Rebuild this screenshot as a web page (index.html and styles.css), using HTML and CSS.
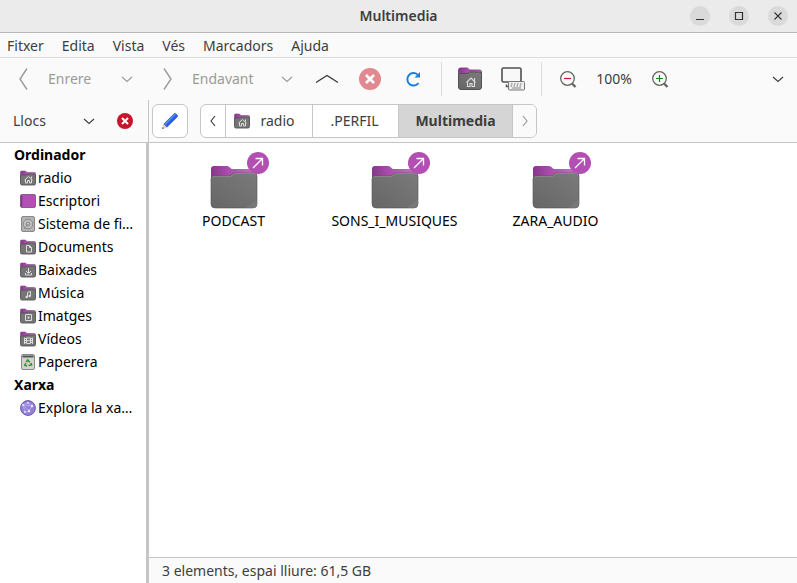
FILE: index.html
```html
<!DOCTYPE html>
<html lang="ca">
<head>
<meta charset="utf-8">
<meta name="viewport" content="width=device-width, initial-scale=1">
<title>Multimedia</title>
<link rel="stylesheet" href="styles.css">
</head>
<body>
<svg class="defs" aria-hidden="true">
  <defs>
    <linearGradient id="tab" x1="0" y1="0" x2="1" y2="0">
      <stop offset="0" stop-color="#84378a"/><stop offset=".35" stop-color="#a94bab"/><stop offset="1" stop-color="#c476c6"/>
    </linearGradient>
    <linearGradient id="front" x1="0" y1="1" x2="1" y2="0">
      <stop offset="0" stop-color="#666"/><stop offset="1" stop-color="#7b7b7b"/>
    </linearGradient>
    <symbol id="chevron" viewBox="0 0 12 8"><path d="M1 2 6 6.500 11 2" fill="none" stroke="currentColor" stroke-width="1.100"/></symbol>
    <symbol id="folder" viewBox="0 0 16 16">
      <path d="M1.500 1h4L7 2.500h7.500q1 0 1 1V8H.5V2q0-1 1-1z" fill="url(#tab)" stroke="#7d467e" stroke-width=".6"/>
      <path d="M.5 6q0-1 1-1h4.500l1-1h7.500q1 0 1 1v8.500q0 1.500-1.500 1.500H2Q.5 15 .5 13.500z" fill="#757575" stroke="#555" stroke-width=".9"/>
    </symbol>
    <symbol id="home-glyph" viewBox="0 0 16 16"><path d="m4.500 10 4-3.500 4 3.500M5.500 9.500v3.500h2v-2.500h2V13h2V9.500M11.500 6.500v2" fill="none" stroke="#ddd"/></symbol>
    <symbol id="big-folder" viewBox="0 0 48 44">
      <path d="M1 4q0-3 3-3h13q2 0 3 1.500T23 4h21q3 0 3 3v16H1z" fill="url(#tab)"/>
      <path d="M1 14q0-3 3-3h15q1.500 0 2.500-1.500T24 8h20q3 0 3 3v28q0 4-4 4H5q-4 0-4-4z" fill="url(#front)" stroke="#555" stroke-width=".6"/>
      <path d="M2 13q.5-1.500 2-1.500h16q1.500 0 2.500-1.500T25 8.500h19q1.500 0 2 1.500" fill="none" stroke="#929292" stroke-width=".7"/>
      <path d="M36 43 47 34v5q0 4-4 4z" fill="#858585" opacity=".4"/>
    </symbol>
  </defs>
</svg>

<div class="window">
  <header class="titlebar">
    <h1 class="title">Multimedia</h1>
    <div class="controls">
      <button class="control" aria-label="Minimitza"><svg width="20" height="20"><path d="M6 13.500h8" stroke="#333" stroke-width="1"/></svg></button>
      <button class="control" aria-label="Maximitza"><svg width="20" height="20"><path d="M6.500 6.500h7v7h-7z" fill="none" stroke="#333" stroke-width="1.200"/></svg></button>
      <button class="control" aria-label="Tanca"><svg width="20" height="20"><path d="m6.500 6.500 7 7m0-7-7 7" stroke="#333" stroke-width="1.100"/></svg></button>
    </div>
  </header>

  <nav class="menubar" aria-label="Menú">
    <button>Fitxer</button><button>Edita</button><button>Vista</button><button>Vés</button><button>Marcadors</button><button>Ajuda</button>
  </nav>

  <div class="toolbar">
    <button class="history back" disabled><svg width="16" height="24"><path d="M11 1.500 4 12l7 10.500" fill="none" stroke="currentColor" stroke-width="1.400"/></svg>Enrere</button>
    <button class="tool drop" disabled aria-label="Historial enrere"><svg width="12" height="8"><use href="#chevron"/></svg></button>
    <button class="history forward" disabled><svg width="16" height="24"><path d="M4 1.500 11 12 4 22.500" fill="none" stroke="currentColor" stroke-width="1.400"/></svg>Endavant</button>
    <button class="tool drop" disabled aria-label="Historial endavant"><svg width="12" height="8"><use href="#chevron"/></svg></button>
    <button class="tool" aria-label="Amunt"><svg width="24" height="24"><path d="m1 15.500 11-7 11 7" fill="none" stroke="#333" stroke-width="1.200"/></svg></button>
    <button class="tool" disabled aria-label="Atura"><svg width="22" height="22"><circle cx="11" cy="11" r="11" fill="#e28891"/><path d="m7 7 8 8m0-8-8 8" stroke="#fff" stroke-width="2.600"/></svg></button>
    <button class="tool" aria-label="Actualitza"><svg width="18" height="18"><path d="M13.500 4.500A6.200 6.200 0 1 0 14.500 13" fill="none" stroke="#1c7fd6" stroke-width="2"/><path d="M16 2v5.500h-5.500z" fill="#1c7fd6"/></svg></button>
    <span class="separator"></span>
    <button class="tool" aria-label="Carpeta personal">
      <svg width="24" height="24" viewBox="0 0 24 24">
        <path d="M.5 3q0-2 2-2h7l2 2h10q2 0 2 2v7H.5z" fill="url(#tab)" stroke="#752f76" stroke-width=".8"/>
        <path d="M.5 8.500q0-2 2-2h7L11.500 5h10q2 0 2 2v13q0 2.500-2.500 2.500H3Q.5 22.500.5 20z" fill="url(#front)" stroke="#505050"/>
        <path d="m8.500 15.500 4.500-4.500 4.500 4.500M9.500 14.500v5h2.500V16.500h2v3h2.500v-5M16.500 11v3" fill="none" stroke="#ddd" stroke-width="1.100"/>
      </svg>
    </button>
    <button class="tool" aria-label="Ordinador">
      <svg width="24" height="24" viewBox="0 0 24 24">
        <rect x="1" y="1" width="19" height="14" rx="1.500" fill="#f8f8f8" stroke="#505050" stroke-width="1.600"/>
        <path d="M5.500 17.500v2H8" fill="none" stroke="#505050" stroke-width="1.400"/>
        <rect x="7.500" y="14.500" width="16" height="8.500" rx="1" fill="#eee" stroke="#777"/>
        <path d="M10 17h12M9.500 19h12" stroke="#777" stroke-width="1.200" stroke-dasharray="1.500 1.500"/><path d="M11 21h9" stroke="#888"/>
      </svg>
    </button>
    <span class="separator"></span>
    <button class="tool zoom" aria-label="Redueix"><svg width="17" height="17"><path d="m12 12.500 3.500 3.500" stroke="#666" stroke-width="2.400"/><circle cx="7.500" cy="7.500" r="6.800" fill="#fafafa" stroke="#66665f" stroke-width="1.300"/><path d="M4 7.500h7" stroke="#c7162b" stroke-width="1.200"/></svg></button>
    <output class="level">100%</output>
    <button class="tool zoom" aria-label="Amplia"><svg width="17" height="17"><path d="m12 12.500 3.500 3.500" stroke="#666" stroke-width="2.400"/><circle cx="7.500" cy="7.500" r="6.800" fill="#fafafa" stroke="#66665f" stroke-width="1.300"/><path d="M4 7.500h7M7.500 4v7" stroke="#0e8420" stroke-width="1.200"/></svg></button>
    <button class="tool more" aria-label="Més"><svg width="12" height="8"><use href="#chevron"/></svg></button>
  </div>

  <div class="panes">
    <aside class="side">
      <div class="side-head">
        <button class="places">Llocs<svg width="12" height="8"><use href="#chevron"/></svg></button>
        <button class="close" aria-label="Tanca la barra"><svg width="16" height="16"><circle cx="8" cy="8" r="8" fill="#c7162b"/><path d="m5 5 6 6m0-6-6 6" stroke="#fff" stroke-width="2"/></svg></button>
      </div>
      <div class="tree">
        <h2>Ordinador</h2>
        <ul>
          <li><a href="#"><svg width="16" height="16"><use href="#folder"/><use href="#home-glyph"/></svg><span>radio</span></a></li>
          <li><a href="#"><svg width="16" height="16"><rect x=".5" y="1.500" width="15" height="13" rx="1.500" fill="#b34fb5" stroke="#8b5c8c"/><path d="M1.500 2.500v11" stroke="#7d3a80" stroke-width="1.500"/></svg><span>Escriptori</span></a></li>
          <li><a href="#"><svg width="16" height="16"><rect x="1.500" y=".5" width="13" height="15" rx="1.500" fill="#b4b4b4" stroke="#888"/><circle cx="8" cy="8" r="4.800" fill="#c2c2c2" stroke="#868686"/><circle cx="8" cy="8" r="2" fill="none" stroke="#858585"/><path d="m8 8-4 5" stroke="#858585"/></svg><span>Sistema de fi…</span></a></li>
          <li><a href="#"><svg width="16" height="16"><use href="#folder"/><path d="M6.500 6.500h3l2 2v4.500h-5zM9.500 6.500v2h2" fill="none" stroke="#ddd"/></svg><span>Documents</span></a></li>
          <li><a href="#"><svg width="16" height="16"><use href="#folder"/><path d="M8.500 6v5M6 9l2.500 2.500L11 9M5.500 11v2h6v-2" fill="none" stroke="#ddd"/></svg><span>Baixades</span></a></li>
          <li><a href="#"><svg width="16" height="16"><use href="#folder"/><path d="M7.500 12V7.500l3-1V11" fill="none" stroke="#ddd"/><circle cx="6.700" cy="12" r="1.200" fill="#ddd"/><circle cx="9.700" cy="11" r="1.200" fill="#ddd"/></svg><span>Música</span></a></li>
          <li><a href="#"><svg width="16" height="16"><use href="#folder"/><path d="M5.500 6.500h6v6h-6z" fill="none" stroke="#ddd"/><path d="M7.500 8.500h2v2h-2z" fill="#ddd"/></svg><span>Imatges</span></a></li>
          <li><a href="#"><svg width="16" height="16"><use href="#folder"/><path d="M6.500 7h4v5.500h-4zM6.500 9.700h4M4.500 6.500v6.500M12.500 6.500v6.500" fill="none" stroke="#ddd"/><path d="M5.500 7v6M11.500 7v6" stroke="#ddd" stroke-dasharray="1 1"/></svg><span>Vídeos</span></a></li>
          <li><a href="#"><svg width="16" height="16"><rect x="1.500" y=".5" width="13" height="15" rx="1.500" fill="#d2d2cf" stroke="#8a8a8a"/><path d="M2.500 2.500h11" stroke="#555" stroke-width="2"/><path d="m6.200 8 1.500-2 2 2.200M11 8.800l.5 2.200-3 .5M7 12l-2.200-.7 1-2.300" fill="none" stroke="#2c9432" stroke-width="1.500"/></svg><span>Paperera</span></a></li>
        </ul>
        <h2>Xarxa</h2>
        <ul>
          <li><a href="#"><svg width="16" height="16"><circle cx="8" cy="8" r="7.400" fill="#9480e0" stroke="#6b5a9b"/><path d="m3 5 5-2 4 3-3 5-4 1zM3 5l6 6M12 6 3 5" fill="none" stroke="#c3b8f1" stroke-width=".7"/><g fill="#eeeaff"><circle cx="3" cy="5" r="1"/><circle cx="8" cy="3" r=".9"/><circle cx="12" cy="6" r="1.200"/><circle cx="9" cy="11" r="1.200"/><circle cx="5" cy="12" r=".9"/></g></svg><span>Explora la xa…</span></a></li>
        </ul>
      </div>
    </aside>

    <div class="content">
      <div class="location">
        <button class="edit" aria-label="Edita la ubicació"><svg width="18" height="18"><path d="m1 17 1.500-5 3.500 3.500z" fill="#f0cfa8"/><path d="m1 17 .7-2 1.300 1.300z" fill="#444"/><path d="M2.500 12 13 1.500q1-1 2 0l1.500 1.500q1 1 0 2L6 15.500z" fill="#285fdc"/><path d="m4 12.500 10.500-10.500" stroke="#5c8cf2" stroke-width="1.500"/></svg></button>
        <nav class="path" aria-label="Ubicació">
          <button class="step first" aria-label="Anterior"><svg width="8" height="12"><path d="M6 1 2 6l4 5" fill="none" stroke="#333" stroke-width="1.100"/></svg></button>
          <button class="crumb home"><svg width="16" height="16"><use href="#folder"/><use href="#home-glyph"/></svg>radio</button>
          <button class="crumb perfil">.PERFIL</button>
          <button class="crumb current" aria-current="page">Multimedia</button>
          <button class="step last" disabled aria-label="Següent"><svg width="8" height="12"><path d="m2 1 4 5-4 5" fill="none" stroke="#999" stroke-width="1.200"/></svg></button>
        </nav>
      </div>
      <main class="files">
        <a class="file" href="#"><span class="art"><svg width="48" height="44"><use href="#big-folder"/></svg><svg class="link" width="22" height="22"><circle cx="11" cy="11" r="11" fill="#b34fb3"/><path d="m6 16 9.500-9.500M8.500 6.500h7v7" fill="none" stroke="#fff" stroke-width="1.300"/></svg></span>PODCAST</a>
        <a class="file" href="#"><span class="art"><svg width="48" height="44"><use href="#big-folder"/></svg><svg class="link" width="22" height="22"><circle cx="11" cy="11" r="11" fill="#b34fb3"/><path d="m6 16 9.500-9.500M8.500 6.500h7v7" fill="none" stroke="#fff" stroke-width="1.300"/></svg></span>SONS_I_MUSIQUES</a>
        <a class="file" href="#"><span class="art"><svg width="48" height="44"><use href="#big-folder"/></svg><svg class="link" width="22" height="22"><circle cx="11" cy="11" r="11" fill="#b34fb3"/><path d="m6 16 9.500-9.500M8.500 6.500h7v7" fill="none" stroke="#fff" stroke-width="1.300"/></svg></span>ZARA_AUDIO</a>
      </main>
      <footer class="status">3 elements, espai lliure: 61,5 GB</footer>
    </div>
  </div>
</div>
</body>
</html>
```
FILE: styles.css
```css
* { box-sizing: border-box; }

body {
  margin: 0;
  background: #fafafa;
  color: #3d3d3d;
  font: 14px/20px "Noto Sans", "Open Sans", sans-serif;
}

button {
  display: flex;
  align-items: center;
  justify-content: center;
  margin: 0;
  padding: 0;
  border: 0;
  background: none;
  color: inherit;
  font: inherit;
}

a { color: inherit; text-decoration: none; }
svg { display: block; flex: none; }
.defs { position: absolute; width: 0; height: 0; }

.window {
  display: flex;
  flex-direction: column;
  min-height: 100vh;
}

/* Title bar */
.titlebar {
  display: grid;
  grid-template-columns: 1fr auto 1fr;
  align-items: center;
  height: 33px;
  padding-right: 9px;
  padding-left: 9px;
  border-bottom: 1px solid #b8b8b8;
  background: #ebebeb;
}
.title {
  grid-column: 2;
  margin: 0;
  font-size: 14px;
  font-weight: 600;
}
.controls { display: flex; justify-content: flex-end; gap: 19px; }
.control { width: 20px; height: 20px; border-radius: 50%; background: #dadada; }

/* Menu */
.menubar {
  display: flex;
  gap: 18px;
  height: 25px;
  padding-top: 2px;
  padding-left: 7px;
  border-bottom: 1px solid #dedede;
}

/* Toolbar */
.toolbar { display: flex; align-items: center; height: 42px; padding-left: 12px; }
.history { justify-content: flex-start; gap: 16px; height: 34px; padding-left: 4px; color: #9a9a9a; }
.back { width: 97px; }
.forward { width: 113px; margin-left: 11px; }
.tool { width: 43px; height: 34px; }
.drop { width: 36px; color: #9a9a9a; }
.separator { width: 1px; height: 34px; margin: 0 6px 0 7px; background: #dcdcdc; }
.zoom { width: 40px; }
.level { width: 52px; text-align: center; }
.more { width: 38px; margin-left: auto; }

/* Panes */
.panes { display: grid; grid-template-columns: 149px 1fr; flex: 1; }
.side { display: flex; flex-direction: column; min-width: 0; }
.side-head {
  display: flex;
  align-items: center;
  justify-content: space-between;
  height: 43px;
  padding: 0 15px 0 13px;
  border-right: 1px solid #c4c4c4;
  border-bottom: 1px solid #c4c4c4;
}
.places { justify-content: space-between; width: 82px; height: 34px; }
.tree {
  flex: 1;
  border-right: 3px solid #c4c6c6;
  background: #fff;
  color: #000;
}
.tree h2 { margin: 0; padding-left: 14px; font-size: 14px; line-height: 23px; }
.tree ul { margin: 0; padding: 0; list-style: none; }
.tree a { display: flex; align-items: center; gap: 2px; height: 23px; padding-left: 20px; white-space: nowrap; }

.content { display: flex; flex-direction: column; min-width: 0; }
.location {
  display: flex;
  align-items: center;
  gap: 12px;
  height: 43px;
  padding-left: 3px;
  border-bottom: 1px solid #c4c4c4;
}
.edit, .path { height: 34px; border: 1px solid #c6c6c6; border-radius: 6px; background: #fff; }
.edit { width: 36px; }
.path { display: flex; overflow: hidden; }
.path button + button { border-left: 1px solid #c6c6c6; }
.step { width: 24px; }
.step.last { background: #fafafa; }
.home { gap: 10px; width: 87px; padding-right: 9px; }
.perfil { width: 86px; padding-right: 2px; }
.path .current { width: 114px; background: #d5d5d5; font-weight: 700; }

.files {
  display: flex;
  flex: 1;
  flex-wrap: wrap;
  align-content: flex-start;
  padding: 9px 4px;
  background: #fff;
}
.file {
  display: flex;
  flex-direction: column;
  align-items: center;
  gap: 2px;
  width: 161px;
  color: #000;
}
.art { position: relative; padding-top: 13px; }
.link { position: absolute; top: 0; right: -11px; }

.status { height: 26px; padding: 3px 13px; border-top: 1px solid #c4c4c4; }
```
